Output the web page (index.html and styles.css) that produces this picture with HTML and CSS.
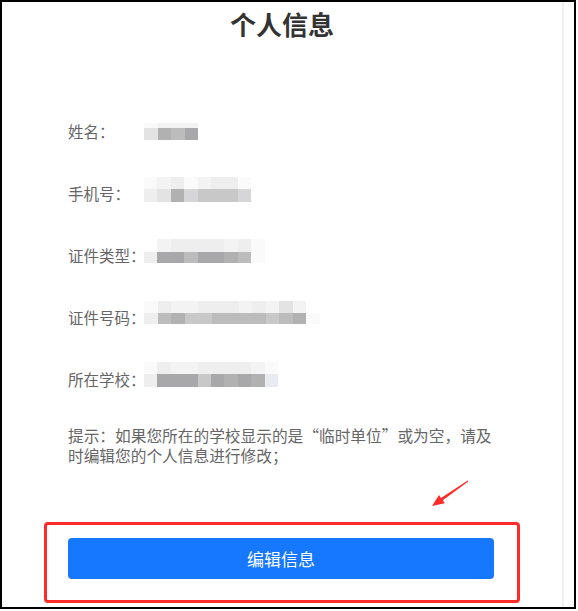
FILE: index.html
```html
<!DOCTYPE html>
<html lang="zh-CN">
<head>
  <meta charset="UTF-8">
  <meta name="viewport" content="width=device-width, initial-scale=1.0">
  <title>个人信息</title>
  <link rel="stylesheet" href="styles.css">
</head>
<body>
  <div class="frame">
    <main class="page">
      <h1 class="title">个人信息</h1>
      <div class="info">
        <div class="row">
          <span class="label">姓名：</span>
          <div class="mosaic m-name">
            <i class="g0"></i><i class="g1"></i><i class="g1"></i><i class="g1"></i>
            <i class="g3"></i><i class="g7"></i><i class="g6"></i><i class="g8"></i>
          </div>
        </div>
        <div class="row">
          <span class="label">手机号：</span>
          <div class="mosaic m-phone">
            <i class="g0"></i><i class="g1"></i><i class="g2"></i><i class="g0"></i><i class="g1"></i><i class="g2"></i><i class="g2"></i><i class="g0"></i>
            <i class="g2"></i><i class="g3"></i><i class="g7"></i><i class="g4"></i><i class="g5"></i><i class="g5"></i><i class="g5"></i><i class="g4"></i>
          </div>
        </div>
        <div class="row">
          <span class="label">证件类型：</span>
          <div class="mosaic m-type">
            <i></i><i class="g1"></i><i class="g2"></i><i class="g2"></i><i class="g2"></i><i class="g2"></i><i class="g1"></i><i class="g2"></i><i class="g0"></i>
            <i class="g2"></i><i class="g8"></i><i class="g8"></i><i class="g6"></i><i class="g8"></i><i class="g8"></i><i class="g7"></i><i class="g6"></i><i class="g0"></i>
          </div>
        </div>
        <div class="row">
          <span class="label">证件号码：</span>
          <div class="mosaic m-id">
            <i class="g0"></i><i class="g2"></i><i class="g1"></i><i class="g1"></i><i class="g2"></i><i class="g2"></i><i class="g2"></i><i class="g1"></i><i class="g2"></i><i class="g1"></i><i class="g3"></i><i class="g1"></i><i></i>
            <i class="g2"></i><i class="g6"></i><i class="g7"></i><i class="g5"></i><i class="g5"></i><i class="g6"></i><i class="g6"></i><i class="g6"></i><i class="g6"></i><i class="g5"></i><i class="g6"></i><i class="g7"></i><i class="g0"></i>
          </div>
        </div>
        <div class="row">
          <span class="label">所在学校：</span>
          <div class="mosaic m-school">
            <i class="g0"></i><i class="g2"></i><i class="g1"></i><i class="g1"></i><i class="g2"></i><i class="g2"></i><i class="g2"></i><i class="g2"></i><i class="g1"></i><i class="g0"></i>
            <i class="g2"></i><i class="g8"></i><i class="g8"></i><i class="g8"></i><i class="g5"></i><i class="g8"></i><i class="g7"></i><i class="g8"></i><i class="g7"></i><i class="gb"></i>
          </div>
        </div>
        <p class="tip">提示：如果您所在的学校显示的是“临时单位”或为空，请及时编辑您的个人信息进行修改；</p>
        <div class="btn-box">
          <button type="button" class="edit-btn">编辑信息</button>
        </div>
      </div>
    </main>
    <div class="scroll"></div>
    <!-- 标注箭头 -->
    <svg class="arrow" width="60" height="45" viewBox="420 470 60 45">
      <polygon fill="#ff2a2a" points="467.7,480.6 441,497.9 439,495 432,506 444.8,503.2 442.8,500.3 468.3,481.4"/>
    </svg>
  </div>
</body>
</html>
```

FILE: styles.css
```css
body{
  margin: 0;
  font-family: "Noto Sans CJK SC", "Noto Sans", sans-serif;
  background: #fff;
}
.frame{
  position: relative;
  width: 576px;
  height: 609px;
  box-sizing: border-box;
  border: 2px solid #000;
  display: flex;
  overflow: hidden;
  background: #fff;
}
.page{
  width: 560px;
  flex-shrink: 0;
}
.scroll{
  width: 2px;
  background: #f0f0f0;
}
.title{
  margin: 9px 0 0;
  font-size: 26px;
  line-height: 26px;
  font-weight: 700;
  text-align: center;
  color: #333;
}
.info{
  width: 426px;
  padding: 63px 0 0 66px;
}
.row{
  display: flex;
  align-items: center;
  height: 62px;
}
.label{
  width: 76px;
  flex-shrink: 0;
  font-size: 15.5px;
  line-height: 20px;
  color: #666;
  white-space: nowrap;
}
.mosaic{
  display: grid;
}
.mosaic i{
  display: block;
}
.m-name{
  grid-template-columns: repeat(4, 13.5px);
  grid-template-rows: 5px 12px;
}
.m-phone{
  grid-template-columns: repeat(8, 13.4px);
  grid-template-rows: 12px 13px;
  margin-bottom: 7px;
}
.m-type{
  grid-template-columns: repeat(9, 13.4px);
  grid-template-rows: 13px 11px;
  margin-bottom: 8px;
}
.m-id{
  grid-template-columns: repeat(13, 13.5px);
  grid-template-rows: 12px 11px;
  margin-bottom: 9px;
}
.m-school{
  grid-template-columns: repeat(10, 13.4px);
  grid-template-rows: 12px 13px;
  margin-bottom: 9px;
}
.g0{ background: #fafafa; }
.g1{ background: #f3f3f3; }
.g2{ background: #eeeeee; }
.g3{ background: #e3e3e3; }
.g4{ background: #d6d6d8; }
.g5{ background: #c8c8c8; }
.g6{ background: #bcbcbc; }
.g7{ background: #b1b1b1; }
.g8{ background: #a8a8aa; }
.gb{ background: #e8ecf0; }
.tip{
  margin: 16px 0 0;
  font-size: 15.7px;
  line-height: 20px;
  color: #666;
}
.btn-box{
  width: 476px;
  box-sizing: border-box;
  margin: 56px 0 0 -24px;
  padding: 13px 23px 21px 21px;
  border: 3px solid #ff2a2a;
  border-radius: 4px;
}
.edit-btn{
  display: block;
  width: 100%;
  height: 41px;
  border: 0;
  border-radius: 4px;
  background: #1677ff;
  color: #fff;
  font-family: inherit;
  font-size: 17px;
}
.arrow{
  position: absolute;
  left: 418px;
  top: 468px;
}
```
